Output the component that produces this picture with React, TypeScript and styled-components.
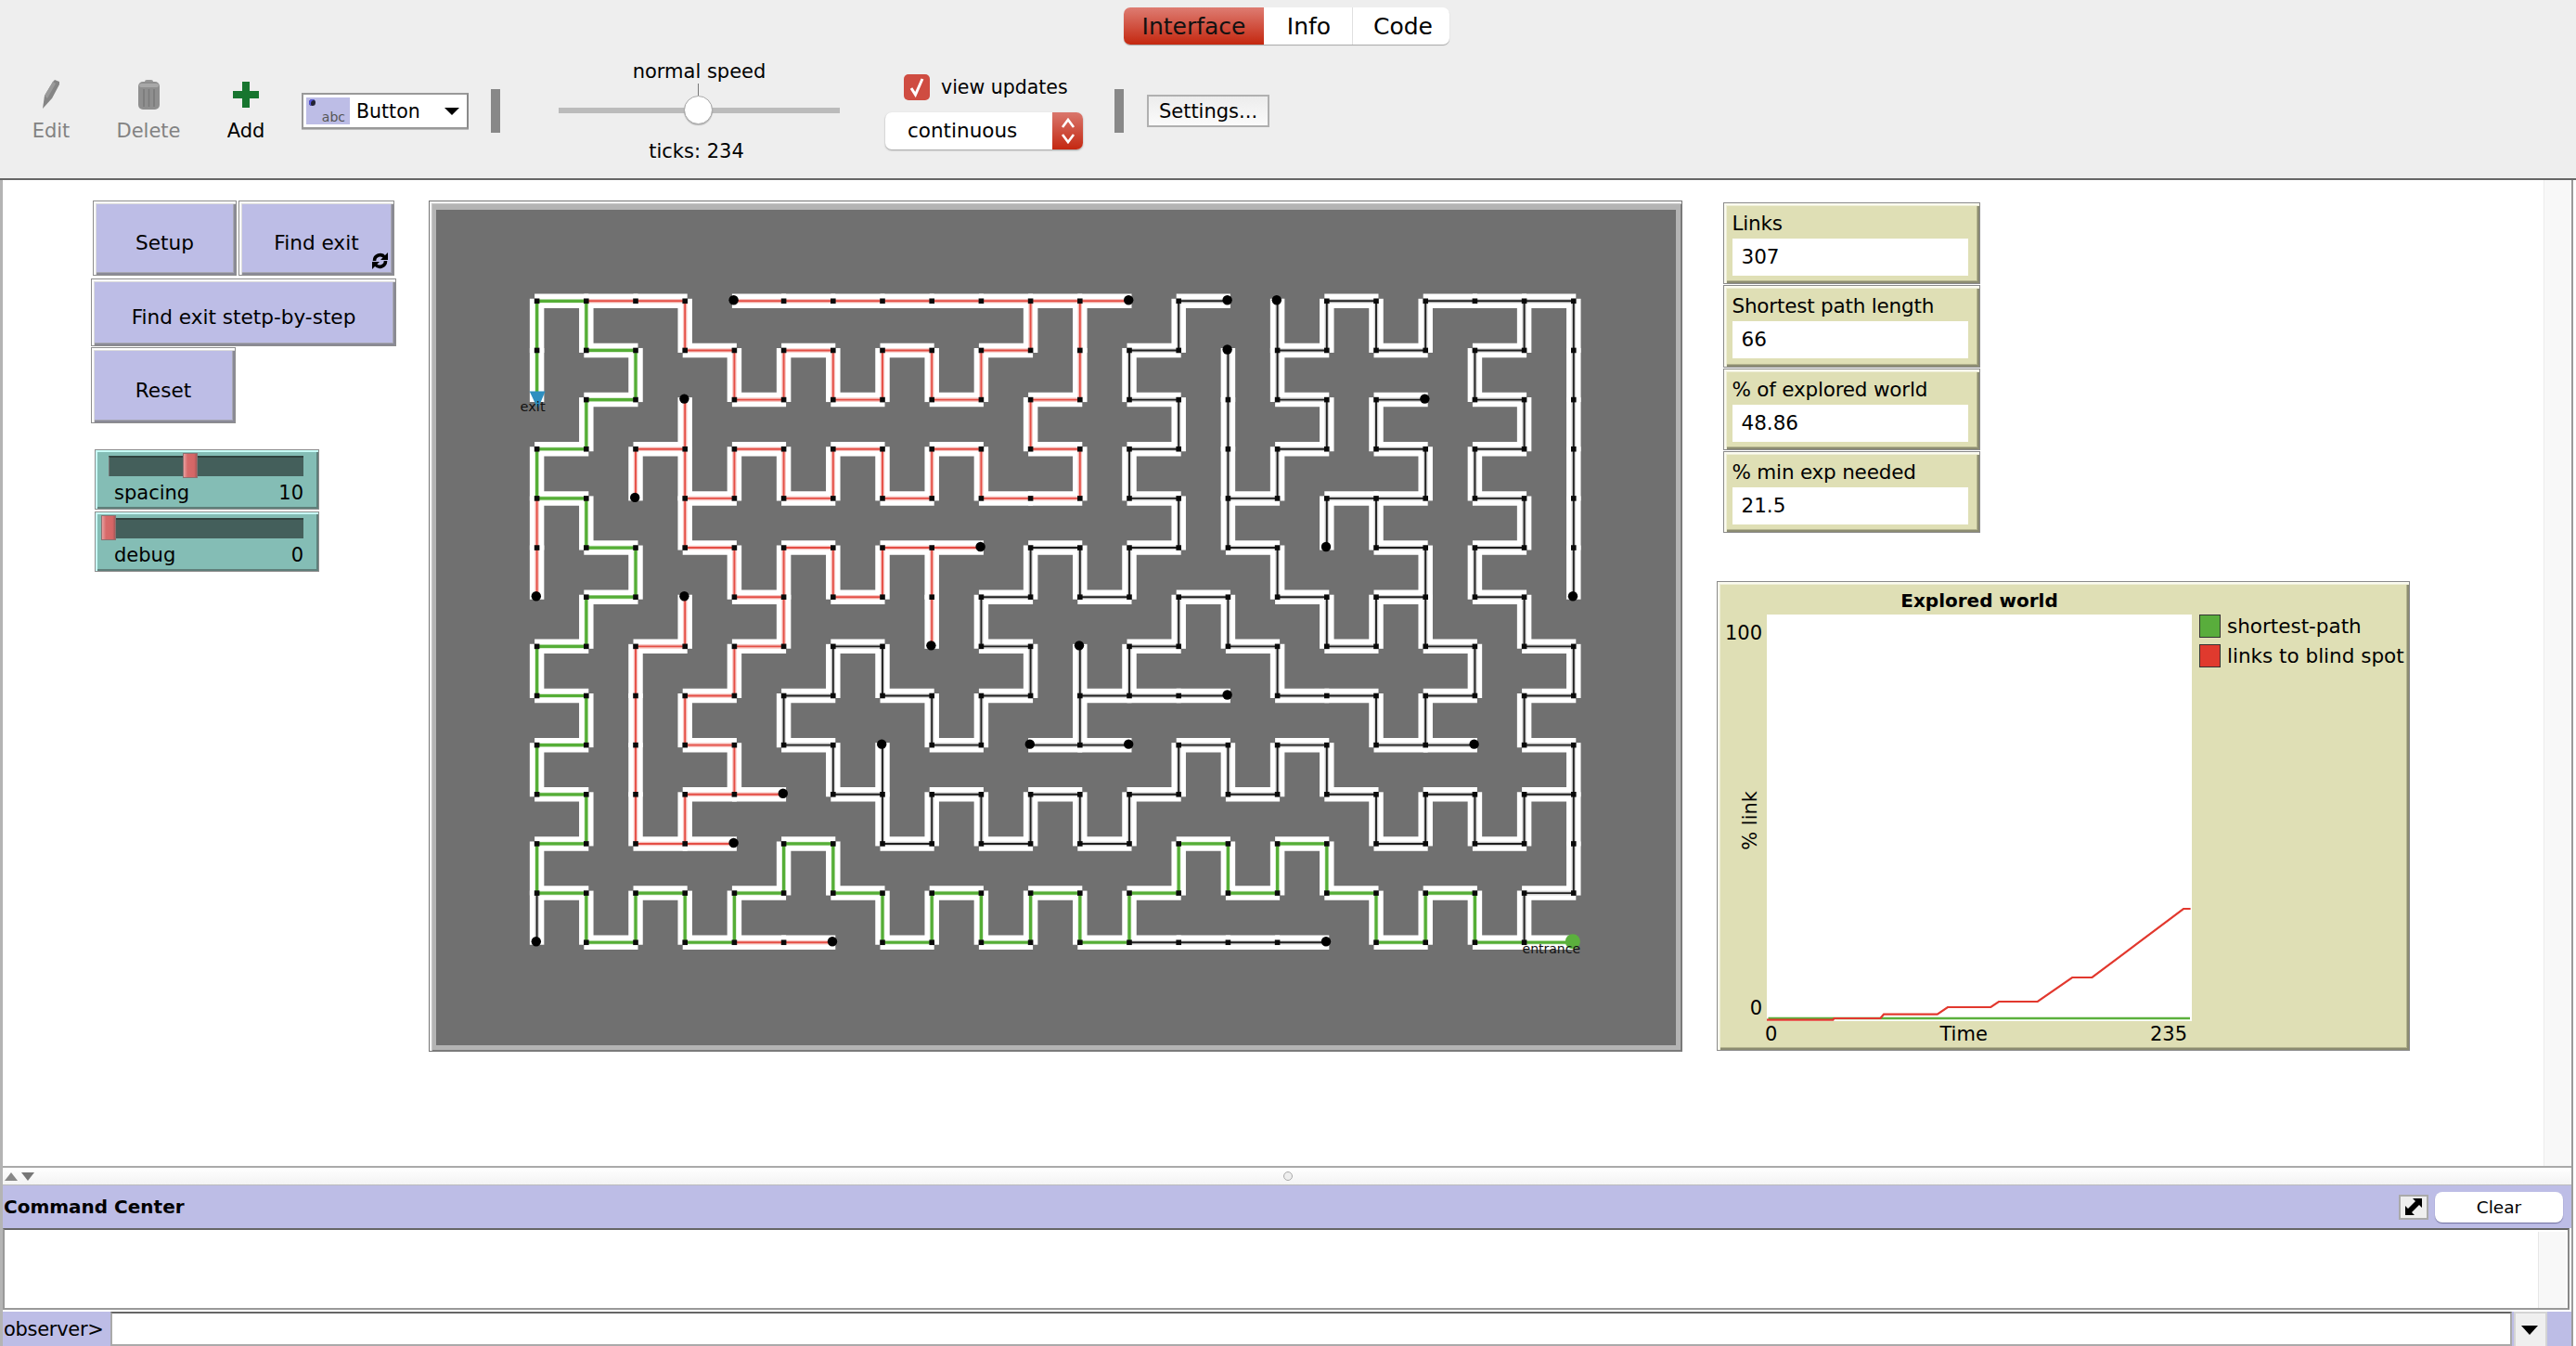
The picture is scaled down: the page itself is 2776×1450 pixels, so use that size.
import React from "react";
import styled, { createGlobalStyle, css } from "styled-components";

const GlobalStyle = createGlobalStyle`
  html, body { margin: 0; padding: 0; background: #fff; }
  body { font-family: "DejaVu Sans", "Liberation Sans", sans-serif; color: #000; }
  * { box-sizing: border-box; }
`;

const Page = styled.div`
  width: 2776px;
  height: 1450px;
  overflow: hidden;
  display: flex;
  flex-direction: column;
  background: #fff;
`;

/* ---------- top bar ---------- */
const TopBar = styled.header`
  height: 194px;
  flex: none;
  background: #eeeeee;
  border-bottom: 2px solid #666;
  display: flex;
  flex-direction: column;
`;
const TabRow = styled.div`
  height: 56px;
  padding: 8px 0 0 1211px;
  display: flex;
`;
const Tabs = styled.div`
  display: flex;
  height: 40px;
  border-radius: 7px;
  box-shadow: 0 1px 1px rgba(0, 0, 0, 0.3);
  background: #fff;
`;
const Tab = styled.div<{ $active?: boolean; $w: number; $pad?: number }>`
  width: ${(p) => p.$w}px;
  display: flex;
  align-items: center;
  justify-content: center;
  font-size: 25px;
  padding: 1px 0 0 ${(p) => p.$pad ?? 0}px;
  border-right: 1px solid #e0e0e0;
  &:first-child { border-radius: 7px 0 0 7px; }
  &:last-child { border-radius: 0 7px 7px 0; border-right: 0; }
  ${(p) =>
    p.$active &&
    css`
      background: linear-gradient(#de7c72, #c4270f);
      color: #111;
      border-right: 0;
    `}
`;
const Toolbar = styled.div`
  height: 128px;
  padding-left: 5px;
  display: flex;
  align-items: center;
`;
const ToolButton = styled.div<{ $off?: boolean }>`
  width: 100px;
  margin-right: 5px;
  display: flex;
  flex-direction: column;
  align-items: center;
  font-size: 21px;
  line-height: 26px;
  gap: 11px;
  color: ${(p) => (p.$off ? "#828282" : "#000")};
`;
const IconSlot = styled.div`
  height: 31px;
  display: flex;
  align-items: center;
  justify-content: center;
`;
const WidgetPicker = styled.div`
  width: 180px;
  height: 39px;
  margin: -1px 0 0 5px;
  padding: 3px 8px 3px 3px;
  background: #fff;
  border: 2px solid #999;
  border-right-color: #8a8a8a;
  box-shadow: 0 1px 0 #bbb;
  display: flex;
  align-items: center;
  font-size: 20.5px;
`;
const PickerIcon = styled.div`
  width: 47px;
  height: 29px;
  margin-right: 7px;
  background: #bdbde6;
  position: relative;
  font-size: 14px;
  color: #555;
  display: flex;
  justify-content: flex-end;
  align-items: flex-end;
  padding-right: 5px;
  line-height: 16px;
  &::before {
    content: "";
    position: absolute;
    left: 3px;
    top: 2px;
    width: 7px;
    height: 7px;
    border-radius: 50%;
    background: #223;
    box-shadow: inset 2px 1px 0 #55d;
  }
`;
const PickerArrow = styled.div`
  margin-left: auto;
  width: 0;
  height: 0;
  border-left: 8px solid transparent;
  border-right: 8px solid transparent;
  border-top: 8px solid #000;
`;
const Separator = styled.div<{ $ml: number }>`
  width: 10px;
  height: 47px;
  margin: -1px 0 0 ${(p) => p.$ml}px;
  background: #888;
`;
const SpeedGroup = styled.div`
  width: 303px;
  margin-left: 63px;
  display: flex;
  flex-direction: column;
  align-items: center;
  font-size: 21px;
`;
const SpeedLabel = styled.div<{ $shift?: number }>`
  height: 26px;
  line-height: 26px;
  margin-right: ${(p) => p.$shift ?? 0}px;
`;
const SpeedTrack = styled.div`
  width: 303px;
  height: 6px;
  margin: 26px 0 28px;
  background: #bbbbbb;
  position: relative;
`;
const SpeedKnob = styled.div`
  position: absolute;
  left: 135px;
  top: -13px;
  width: 31px;
  height: 31px;
  border-radius: 50%;
  background: #fff;
  border: 1px solid #aaa;
  box-shadow: 0 1px 1px rgba(0, 0, 0, 0.25);
  &::before {
    content: "";
    position: absolute;
    left: 14px;
    top: -14px;
    width: 1px;
    height: 13px;
    background: #777;
  }
`;
const UpdateGroup = styled.div`
  width: 213px;
  margin-left: 49px;
  display: flex;
  flex-direction: column;
`;
const CheckRow = styled.div`
  height: 28px;
  margin-left: 20px;
  display: flex;
  align-items: center;
  gap: 12px;
  font-size: 20.5px;
`;
const CheckBox = styled.div`
  width: 28px;
  height: 28px;
  border-radius: 5px;
  background: #cf4c41;
  display: flex;
  align-items: center;
  justify-content: center;
`;
const UpdateSelect = styled.div`
  height: 40px;
  margin-top: 13px;
  border-radius: 7px;
  background: #fff;
  box-shadow: 0 1px 2px rgba(0, 0, 0, 0.35);
  display: flex;
  align-items: center;
  justify-content: space-between;
  font-size: 21.5px;
  padding-left: 24px;
  overflow: hidden;
`;
const Stepper = styled.div`
  width: 33px;
  height: 40px;
  background: linear-gradient(#d9776d, #c42811);
  display: flex;
  align-items: center;
  justify-content: center;
`;
const SettingsButton = styled.div`
  width: 132px;
  height: 35px;
  margin: -1px 0 0 25px;
  border: 2px solid #b0b0b0;
  background: linear-gradient(#ececec, #fbfbfb);
  display: flex;
  align-items: center;
  justify-content: center;
  font-size: 21px;
`;

/* ---------- interface canvas ---------- */
const Workspace = styled.main`
  flex: 1;
  min-height: 0;
  display: flex;
  flex-direction: column;
  margin-right: 3px;
  border-left: 3px solid #b4b4b4;
  border-right: 2px solid #9a9a9a;
`;
const Canvas = styled.section`
  height: 1062px;
  flex: none;
  display: flex;
  align-items: flex-start;
  padding-top: 22px;
`;
const LeftColumn = styled.div`
  width: 329px;
  margin-left: 95px;
  display: flex;
  flex-direction: column;
`;
const ButtonRow = styled.div`
  display: flex;
  gap: 2px;
  margin: 0 0 3px 2px;
`;
const bevel = css`
  border: 1px solid #8d8d8d;
  box-shadow: inset 2px 2px 0 #fff, inset 3px 3px 0 #dcdcdc, inset -2px -2px 0 #8a8a96, inset -3px -3px 0 #a8a8b4;
`;
const WidgetButton = styled.div<{ $w: number; $h: number; $ml?: number; $mb?: number }>`
  ${bevel}
  width: ${(p) => p.$w}px;
  height: ${(p) => p.$h}px;
  margin-left: ${(p) => p.$ml ?? 0}px;
  margin-bottom: ${(p) => p.$mb ?? 0}px;
  background: #bdbde6;
  font-size: 21.6px;
  display: flex;
  align-items: center;
  justify-content: center;
  padding-top: 10px;
  position: relative;
`;
const ForeverMark = styled.svg`
  position: absolute;
  right: 6px;
  bottom: 6px;
  width: 17px;
  height: 18px;
`;
const SliderWidget = styled.div<{ $mt: number }>`
  ${bevel}
  width: 242px;
  height: 65px;
  margin: ${(p) => p.$mt}px 0 0 4px;
  background: #84bdb5;
  padding: 6px 16px 0 14px;
  box-shadow: inset 2px 2px 0 #c8fff8, inset -2px -2px 0 #5f7f7a;
`;
const SliderTrack = styled.div`
  height: 22px;
  background: #445f5b;
  border-top: 2px solid #30423f;
  border-left: 1px solid #777;
  position: relative;
`;
const SliderKnob = styled.div`
  position: absolute;
  top: -5px;
  width: 16px;
  height: 27px;
  background: linear-gradient(90deg, #e9a0a0 0, #d76a6a 30%, #d56666 80%, #a85858 100%);
  border: 1px solid #8c7070;
`;
const SliderLabels = styled.div`
  display: flex;
  justify-content: space-between;
  font-size: 21px;
  line-height: 26px;
  margin: 5px 0 0 6px;
`;

const ViewFrame = styled.div`
  width: 1351px;
  height: 917px;
  flex: none;
  margin-left: 35px;
  padding: 9px 6px 6px 7px;
  border: 1px solid #777;
  background: #b4b4b4;
  box-shadow: inset 2px 2px 0 #f6f6f6, inset 3px 3px 0 #c8c8c8, inset -1px -1px 0 #7c7c7c;
`;
const MazeSvg = styled.svg`
  display: block;
  width: 100%;
  height: 100%;
  background: #707070;
`;

const RightColumn = styled.div`
  margin-left: 37px;
  display: flex;
  flex-direction: column;
`;
const MonitorStack = styled.div`
  margin: 2px 0 0 6.5px;
  display: flex;
  flex-direction: column;
  gap: 1px;
`;
const softBevel = css`
  border: 1px solid #8a8a8a;
  box-shadow: inset 2px 2px 0 #fbfbf0, inset 3px 3px 0 #efefd8, inset -2px -2px 0 #8c8c72, inset -3px -3px 0 #b4b48e;
  background: #dfdfb5;
`;
const Monitor = styled.div`
  ${softBevel}
  width: 277px;
  height: 88.25px;
  padding: 5px 0 0 9px;
`;
const MonitorLabel = styled.div`
  height: 33px;
  line-height: 33px;
  font-size: 21.5px;
  white-space: nowrap;
  letter-spacing: -0.2px;
`;
const MonitorValue = styled.div`
  width: 254px;
  height: 40px;
  padding-left: 10px;
  background: #fff;
  font-size: 21.5px;
  line-height: 40px;
`;
const PlotWidget = styled.div`
  ${softBevel}
  width: 747px;
  height: 506px;
  margin-top: 52px;
  display: grid;
  grid-template-columns: 53px 458px 1fr;
  grid-template-rows: 35px 438px 1fr;
`;
const PlotTitle = styled.div`
  grid-column: 2;
  grid-row: 1;
  text-align: center;
  font-weight: 700;
  font-size: 20px;
  line-height: 40px;
  white-space: nowrap;
`;
const YAxis = styled.div`
  grid-column: 1;
  grid-row: 2;
  display: flex;
  flex-direction: column;
  align-items: flex-end;
  justify-content: space-between;
  padding: 7px 5px 1px 0;
  font-size: 21px;
  line-height: 26px;
`;
const RotatedLabel = styled.div`
  writing-mode: vertical-rl;
  transform: rotate(180deg);
`;
const PlotArea = styled.svg`
  grid-column: 2;
  grid-row: 2;
  display: block;
  width: 458px;
  height: 438px;
  background: #fff;
`;
const Legend = styled.div`
  grid-column: 3;
  grid-row: 2;
  padding-left: 8px;
  display: flex;
  flex-direction: column;
  gap: 7px;
`;
const LegendRow = styled.div`
  display: flex;
  align-items: center;
  gap: 7px;
  height: 25px;
  font-size: 21.5px;
  white-space: nowrap;
`;
const Swatch = styled.div<{ $c: string }>`
  width: 23px;
  height: 25px;
  flex: none;
  background: ${(p) => p.$c};
  border: 1px solid #333;
`;
const XAxis = styled.div`
  grid-column: 2;
  grid-row: 3;
  display: flex;
  justify-content: space-between;
  padding: 1px 5px 0 0;
  margin-left: -2px;
  font-size: 21px;
  line-height: 26px;
`;
const CanvasScroll = styled.div`
  width: 30px;
  height: 1062px;
  margin: -22px 0 0 auto;
  background: #f8f8f8;
  border-left: 1px solid #ececec;
`;

/* ---------- command center ---------- */
const SplitLine = styled.div`
  height: 2px;
  flex: none;
  background: #aaa;
`;
const SplitStrip = styled.div`
  height: 19px;
  flex: none;
  background: linear-gradient(#fff, #f3f3f3);
  border-bottom: 1px solid #bbb;
  display: flex;
  align-items: center;
  padding-left: 2px;
  gap: 4px;
`;
const Tri = styled.div<{ $down?: boolean }>`
  width: 0;
  height: 0;
  border-left: 7px solid transparent;
  border-right: 7px solid transparent;
  ${(p) => (p.$down ? "border-top: 9px solid #777;" : "border-bottom: 9px solid #888;")}
`;
const SplitDot = styled.div`
  width: 10px;
  height: 10px;
  border-radius: 50%;
  margin-left: 1342px;
  border: 1px solid #aaa;
  background: #eee;
`;
const CommandHeader = styled.div`
  height: 46px;
  flex: none;
  background: #bdbde6;
  display: flex;
  align-items: center;
  padding: 0 9px 0 1px;
  font-weight: 700;
  font-size: 20px;
`;
const ExpandButton = styled.div`
  width: 32px;
  height: 27px;
  margin-left: auto;
  background: #eee;
  border: 2px solid #aaa;
  display: flex;
  align-items: center;
  justify-content: center;
`;
const ClearButton = styled.div`
  width: 138px;
  height: 33px;
  margin-left: 7px;
  border-radius: 8px;
  background: #fff;
  box-shadow: 0 1px 1px rgba(60, 60, 110, 0.6);
  display: flex;
  align-items: center;
  justify-content: center;
  font-weight: 400;
  font-size: 18.5px;
`;
const OutputArea = styled.div`
  height: 88px;
  flex: none;
  margin-right: 2px;
  background: #fff;
  border-top: 2px solid #666;
  border-left: 2px solid #999;
  border-right: 2px solid #888;
  border-bottom: 2px solid #999;
  display: flex;
  justify-content: flex-end;
  padding: 2px 2px 0 0;
`;
const OutputScroll = styled.div`
  width: 30px;
  background: #f8f8f8;
  border-left: 1px solid #e6e6e6;
`;
const ObserverRow = styled.div`
  flex: 1;
  min-height: 0;
  margin-top: 2px;
  background: #bdbde6;
  display: flex;
  align-items: stretch;
`;
const ObserverLabel = styled.div`
  width: 116px;
  padding-left: 1px;
  font-size: 21px;
  line-height: 38px;
  white-space: nowrap;
  letter-spacing: -0.3px;
`;
const CommandInput = styled.div`
  width: 2588px;
  background: #fff;
  border-top: 2px solid #666;
  border-left: 2px solid #aaa;
  border-right: 2px solid #aaa;
  border-bottom: 2px solid #aaa;
`;
const HistoryButton = styled.div`
  width: 36px;
  margin-left: 2px;
  background: #efefef;
  border: 2px solid #d4d4d4;
  border-bottom: 0;
  display: flex;
  align-items: center;
  justify-content: center;
`;
const HistoryArrow = styled.div`
  width: 0;
  height: 0;
  border-left: 9px solid transparent;
  border-right: 9px solid transparent;
  border-top: 10px solid #000;
  margin-left: -2px;
`;

/* ---------- maze data ---------- */
type Colour = "g" | "r" | "k";
type Seg = [number, number, Colour];

const H: Seg[][] = [
  [[0, 1, "g"], [1, 3, "r"], [4, 12, "r"], [13, 14, "k"], [16, 17, "k"], [18, 21, "k"]],
  [[1, 2, "g"], [3, 4, "r"], [5, 6, "r"], [7, 8, "r"], [9, 10, "r"], [12, 13, "k"], [15, 16, "k"], [17, 18, "k"], [19, 20, "k"]],
  [[1, 2, "g"], [4, 5, "r"], [6, 7, "r"], [8, 9, "r"], [10, 11, "r"], [12, 13, "k"], [15, 16, "k"], [17, 18, "k"], [19, 20, "k"]],
  [[0, 1, "g"], [2, 3, "r"], [4, 5, "r"], [6, 7, "r"], [8, 9, "r"], [10, 11, "r"], [12, 13, "k"], [15, 16, "k"], [17, 18, "k"], [19, 20, "k"]],
  [[0, 1, "g"], [3, 4, "r"], [5, 6, "r"], [7, 8, "r"], [9, 11, "r"], [12, 13, "k"], [14, 15, "k"], [16, 18, "k"], [19, 20, "k"]],
  [[1, 2, "g"], [3, 4, "r"], [5, 6, "r"], [7, 9, "r"], [10, 11, "k"], [12, 13, "k"], [14, 15, "k"], [17, 18, "k"], [19, 20, "k"]],
  [[1, 2, "g"], [4, 5, "r"], [6, 7, "r"], [9, 10, "k"], [11, 12, "k"], [13, 14, "k"], [15, 16, "k"], [17, 18, "k"], [19, 20, "k"]],
  [[0, 1, "g"], [2, 3, "r"], [4, 5, "r"], [6, 7, "k"], [9, 10, "k"], [12, 13, "k"], [14, 15, "k"], [16, 17, "k"], [18, 19, "k"], [20, 21, "k"]],
  [[0, 1, "g"], [3, 4, "r"], [5, 6, "k"], [7, 8, "k"], [9, 10, "k"], [11, 14, "k"], [15, 17, "k"], [18, 19, "k"], [20, 21, "k"]],
  [[0, 1, "g"], [3, 4, "r"], [5, 6, "k"], [8, 9, "k"], [10, 12, "k"], [13, 14, "k"], [15, 16, "k"], [17, 19, "k"], [20, 21, "k"]],
  [[0, 1, "g"], [3, 5, "r"], [6, 7, "k"], [8, 9, "k"], [10, 11, "k"], [12, 13, "k"], [14, 15, "k"], [16, 17, "k"], [18, 19, "k"], [20, 21, "k"]],
  [[0, 1, "g"], [2, 4, "r"], [5, 6, "g"], [7, 8, "k"], [9, 10, "k"], [11, 12, "k"], [13, 14, "g"], [15, 16, "g"], [17, 18, "k"], [19, 20, "k"]],
  [[0, 1, "g"], [2, 3, "g"], [4, 5, "g"], [6, 7, "g"], [8, 9, "g"], [10, 11, "g"], [12, 13, "g"], [14, 15, "g"], [16, 17, "g"], [18, 19, "g"], [20, 21, "k"]],
  [[1, 2, "g"], [3, 4, "g"], [4, 6, "r"], [7, 8, "g"], [9, 10, "g"], [11, 12, "g"], [12, 16, "k"], [17, 18, "g"], [19, 21, "g"]],
];

const V: string[] = [
  "0g 1g 3r 10r 11r 13k 15k 16k 17k 18k 20k 21k",
  "0g 2g 4r 5r 6r 7r 8r 9r 11r 12k 14k 15k 19k 21k",
  "1g 3r 10r 13k 14k 16k 17k 20k 21k",
  "0g 2r 3r 4r 5r 6r 7r 8r 9r 11r 12k 14k 15k 18k 19k 21k",
  "0r 1g 3r 13k 14k 16k 17k 20k 21k",
  "0r 2g 4r 5r 6r 7r 8r 10k 11k 12k 15k 18k 19k 21k",
  "1g 3r 5r 8r 9k 13k 14k 16k 17k 18k 20k",
  "0g 2r 4r 6k 7k 10k 11k 12k 15k 19k 21k",
  "1g 2r 3r 5k 8k 9k 11k 17k 18k 20k",
  "0g 2r 4r 6k 7k 13k 14k 15k 16k 21k",
  "1g 2r 3r 7k 8k 9k 10k 11k 12k 17k 18k 19k 20k 21k",
  "0g 5g 6g 13g 14g 15g 16g 21k",
  "0k 1g 2g 3g 4g 7g 8g 9g 10g 11g 12g 17g 18g 19g 20k",
];

const COLOURS: Record<Colour, string> = { g: "#55ae36", r: "#e2382e", k: "#0c0c0c" };
const CORE_WIDTH: Record<Colour, number> = { g: 3.2, r: 1.9, k: 1.9 };
const ORIGIN_X = 578.6 - 470;
const ORIGIN_Y = 324.3 - 226;
const px = (c: number) => ORIGIN_X + 53.2 * c;
const py = (r: number) => ORIGIN_Y + 53.15 * r;

type Link = { x1: number; y1: number; x2: number; y2: number; colour: Colour };
const links: Link[] = [];
const degree = new Map<string, number>();
const bump = (c: number, r: number) => {
  const k = `${c},${r}`;
  degree.set(k, (degree.get(k) ?? 0) + 1);
};
H.forEach((row, r) =>
  row.forEach(([a, b, colour]) => {
    for (let c = a; c < b; c++) {
      links.push({ x1: px(c), y1: py(r), x2: px(c + 1), y2: py(r), colour });
      bump(c, r);
      bump(c + 1, r);
    }
  })
);
V.forEach((gap, r) =>
  gap.split(" ").forEach((tok) => {
    const c = parseInt(tok, 10);
    const colour = tok[tok.length - 1] as Colour;
    links.push({ x1: px(c), y1: py(r), x2: px(c), y2: py(r + 1), colour });
    bump(c, r);
    bump(c, r + 1);
  })
);
const EXT = 2.5;
const nodes = Array.from(degree.entries()).map(([k, d]) => {
  const [c, r] = k.split(",").map(Number);
  return { c, r, d };
});

const Maze = () => (
  <MazeSvg viewBox="0 0 1336 900" preserveAspectRatio="none">
    {links.map((l, i) => {
      const h = l.y1 === l.y2;
      return (
        <line
          key={`w${i}`}
          x1={h ? l.x1 - EXT : l.x1}
          x2={h ? l.x2 + EXT : l.x2}
          y1={h ? l.y1 : l.y1 - EXT}
          y2={h ? l.y2 : l.y2 + EXT}
          stroke="#fff"
          strokeWidth={15.5}
        />
      );
    })}
    {links.map((l, i) => (
      <line
        key={`h${i}`}
        {...l}
        stroke={COLOURS[l.colour]}
        strokeOpacity={l.colour === "k" ? 0.18 : 0.28}
        strokeWidth={4.6}
      />
    ))}
    {links.map((l, i) => (
      <line
        key={`c${i}`}
        {...l}
        stroke={COLOURS[l.colour]}
        strokeOpacity={l.colour === "g" ? 1 : l.colour === "k" ? 0.9 : 0.85}
        strokeWidth={CORE_WIDTH[l.colour]}
      />
    ))}
    {nodes.map(({ c, r, d }) => {
      if ((c === 0 && r === 2) || (c === 21 && r === 13)) return null;
      return d === 1 ? (
        <circle key={`n${c}-${r}`} cx={px(c) - 0.8} cy={py(r) - 1} r={5.2} fill="#000" />
      ) : (
        <rect key={`n${c}-${r}`} x={px(c) - 2.8} y={py(r) - 2.8} width={5.6} height={5.6} fill="#0a0a0a" />
      );
    })}
    <polygon points={`${px(0) - 8},${py(2) - 9} ${px(0) + 9},${py(2) - 9} ${px(0) + 1},${py(2) + 10}`} fill="#2f8fc0" />
    <text x={px(0) - 4.5} y={py(2) + 12} textAnchor="middle" fontSize="14.5" fill="#111" fontFamily="'DejaVu Sans', sans-serif">
      exit
    </text>
    <circle cx={px(21) - 1} cy={py(13) - 1} r={8} fill="#5bb03d" />
    <text x={px(21) - 24} y={py(13) + 12} textAnchor="middle" fontSize="14" fill="#111" fontFamily="'DejaVu Sans', sans-serif">
      entrance
    </text>
  </MazeSvg>
);

/* ---------- plot data (real px relative to the plot area) ---------- */
const toPlot = (x: number, y: number) => `${(x / 1.96 + 1830 - 1904).toFixed(1)},${(y / 3 + 880 - 662).toFixed(1)}`;
const redLine = [
  [145, 656], [285, 656], [287, 651], [385, 651], [392, 638], [505, 638], [527, 615], [618, 615], [635, 597],
  [717, 597], [790, 519], [832, 519], [1025, 297], [1040, 297],
]
  .map(([x, y]) => toPlot(x, y))
  .join(" ");

const Swoop = () => (
  <ForeverMark viewBox="0 0 17 18">
    <path d="M2.5 9 C2.5 3 10 0.5 13.5 5" fill="none" stroke="#000" strokeWidth="3.6" />
    <polygon points="9,8 17,8 17,0" fill="#000" />
    <path d="M14.5 9 C14.5 15 7 17.5 3.5 13" fill="none" stroke="#000" strokeWidth="3.6" />
    <polygon points="8,10 0,10 0,18" fill="#000" />
  </ForeverMark>
);

const monitors: [string, string][] = [
  ["Links", "307"],
  ["Shortest path length", "66"],
  ["% of explored world", "48.86"],
  ["% min exp needed", "21.5"],
];

export default function App() {
  return (
    <Page>
      <GlobalStyle />
      <TopBar>
        <TabRow>
          <Tabs>
            <Tab $active $w={151}>Interface</Tab>
            <Tab $w={96} $pad={2}>Info</Tab>
            <Tab $w={104} $pad={4}>Code</Tab>
          </Tabs>
        </TabRow>
        <Toolbar>
          <ToolButton $off>
            <IconSlot>
              <svg width="20" height="31" viewBox="0 0 20 31">
                <polygon points="1,31 3,17 12,2 14,0 19,2 19,5 11,20" fill="#858585" />
                <polygon points="3,17 12,2 15,4 6,20" fill="#9a9a9a" />
              </svg>
            </IconSlot>
            Edit
          </ToolButton>
          <ToolButton $off>
            <IconSlot>
              <svg width="23" height="32" viewBox="0 0 23 32">
                <rect x="7" y="0" width="9" height="4" rx="2" fill="#999" />
                <rect x="0" y="2" width="23" height="30" rx="5" fill="#8f8f8f" />
                <rect x="1" y="4" width="21" height="4" rx="2" fill="#a8a8a8" />
                <path d="M6 10V29M11.5 10V29M17 10V29" stroke="#7a7a7a" strokeWidth="1.5" />
              </svg>
            </IconSlot>
            Delete
          </ToolButton>
          <ToolButton>
            <IconSlot>
              <svg width="28" height="28" viewBox="0 0 28 28">
                <path d="M10 0H18V10H28V18H18V28H10V18H0V10H10Z" fill="#17752f" />
              </svg>
            </IconSlot>
            Add
          </ToolButton>
          <WidgetPicker>
            <PickerIcon>abc</PickerIcon>
            Button
            <PickerArrow />
          </WidgetPicker>
          <Separator $ml={24} />
          <SpeedGroup>
            <SpeedLabel>normal speed</SpeedLabel>
            <SpeedTrack>
              <SpeedKnob />
            </SpeedTrack>
            <SpeedLabel $shift={6}>ticks: 234</SpeedLabel>
          </SpeedGroup>
          <UpdateGroup>
            <CheckRow>
              <CheckBox>
                <svg width="18" height="22" viewBox="0 0 18 22">
                  <path d="M3 12 L7.5 19 L15 2" fill="none" stroke="#fff" strokeWidth="3" />
                </svg>
              </CheckBox>
              view updates
            </CheckRow>
            <UpdateSelect>
              continuous
              <Stepper>
                <svg width="18" height="32" viewBox="0 0 18 32">
                  <path d="M3 12 L9 4 L15 12M3 20 L9 28 L15 20" fill="none" stroke="#fff" strokeWidth="2.6" />
                </svg>
              </Stepper>
            </UpdateSelect>
          </UpdateGroup>
          <Separator $ml={34} />
          <SettingsButton>Settings...</SettingsButton>
        </Toolbar>
      </TopBar>

      <Workspace>
        <Canvas>
          <LeftColumn>
            <ButtonRow>
              <WidgetButton $w={155} $h={81}>Setup</WidgetButton>
              <WidgetButton $w={168} $h={81}>
                Find exit
                <Swoop />
              </WidgetButton>
            </ButtonRow>
            <WidgetButton $w={329} $h={73} $mb={1}>Find exit stetp-by-step</WidgetButton>
            <WidgetButton $w={156} $h={82}>Reset</WidgetButton>
            <SliderWidget $mt={28}>
              <SliderTrack>
                <SliderKnob style={{ left: 79 }} />
              </SliderTrack>
              <SliderLabels>
                <span>spacing</span>
                <span>10</span>
              </SliderLabels>
            </SliderWidget>
            <SliderWidget $mt={2}>
              <SliderTrack>
                <SliderKnob style={{ left: -9 }} />
              </SliderTrack>
              <SliderLabels>
                <span>debug</span>
                <span>0</span>
              </SliderLabels>
            </SliderWidget>
          </LeftColumn>

          <ViewFrame>
            <Maze />
          </ViewFrame>

          <RightColumn>
            <MonitorStack>
              {monitors.map(([label, value]) => (
                <Monitor key={label}>
                  <MonitorLabel>{label}</MonitorLabel>
                  <MonitorValue>{value}</MonitorValue>
                </Monitor>
              ))}
            </MonitorStack>
            <PlotWidget>
              <PlotTitle>Explored world</PlotTitle>
              <YAxis>
                <span>100</span>
                <RotatedLabel>% link</RotatedLabel>
                <span>0</span>
              </YAxis>
              <PlotArea viewBox="0 0 458 438">
                <line x1="1.5" y1="435" x2="456" y2="435" stroke="#5bb03d" strokeWidth="2.4" />
                <polyline points={redLine} fill="none" stroke="#e2382e" strokeWidth="2.2" />
              </PlotArea>
              <Legend>
                <LegendRow>
                  <Swatch $c="#59ad3c" />
                  shortest-path
                </LegendRow>
                <LegendRow>
                  <Swatch $c="#e03a2e" />
                  links to blind spot
                </LegendRow>
              </Legend>
              <XAxis>
                <span>0</span>
                <span>Time</span>
                <span>235</span>
              </XAxis>
            </PlotWidget>
          </RightColumn>
          <CanvasScroll />
        </Canvas>

        <SplitLine />
        <SplitStrip>
          <Tri />
          <Tri $down />
          <SplitDot />
        </SplitStrip>
        <CommandHeader>
          Command Center
          <ExpandButton>
            <svg width="18" height="18" viewBox="0 0 18 18">
              <path d="M0 18V8L3 11L11 3L8 0H18V10L15 7L7 15L10 18Z" fill="#000" />
            </svg>
          </ExpandButton>
          <ClearButton>Clear</ClearButton>
        </CommandHeader>
        <OutputArea>
          <OutputScroll />
        </OutputArea>
        <ObserverRow>
          <ObserverLabel>observer&gt;</ObserverLabel>
          <CommandInput />
          <HistoryButton>
            <HistoryArrow />
          </HistoryButton>
        </ObserverRow>
      </Workspace>
    </Page>
  );
}
